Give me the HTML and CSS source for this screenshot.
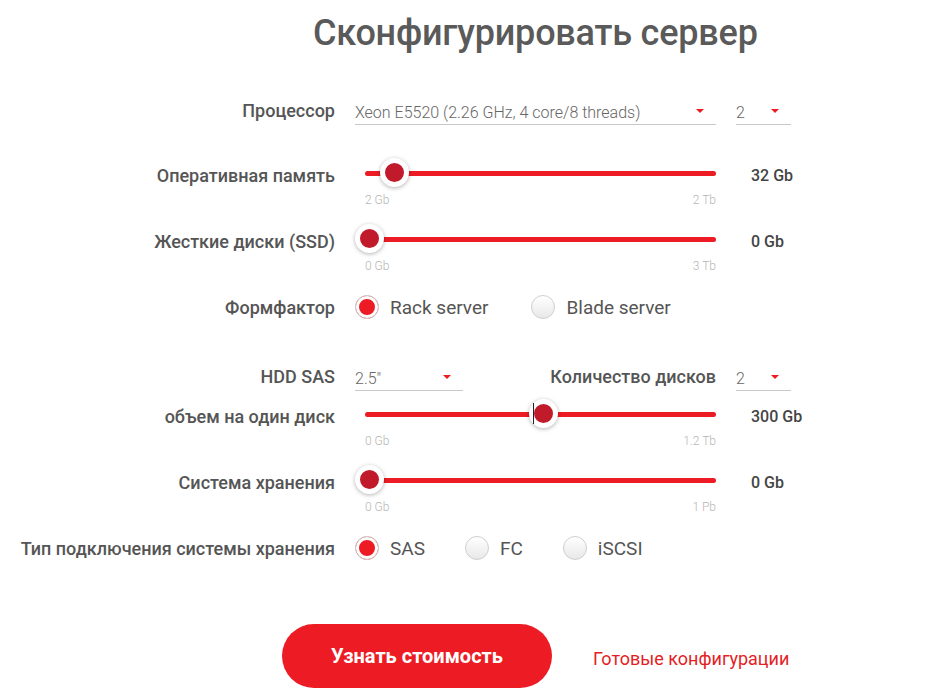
FILE: index.html
```html
<!DOCTYPE html>
<html lang="ru">
    <head>
        <meta charset="UTF-8">
        <meta name="viewport" content="width=device-width, initial-scale=1.0">
        <title>Сконфигурировать сервер</title>
        <link rel="stylesheet" href="styles.css">
    </head>
    <body>

        <div id="configurator">
            <h1 class="title">Сконфигурировать сервер</h1>

            <div class="row row-select">
                <div class="label">Процессор</div>
                <div class="control">
                    <div class="select select-wide">Xeon E5520 (2.26 GHz, 4 core/8 threads)<span class="arrow"></span></div>
                </div>
                <div class="value">
                    <div class="select select-small">2<span class="arrow"></span></div>
                </div>
            </div>

            <div class="row row-slider row-memory">
                <div class="label">Оперативная память</div>
                <div class="control">
                    <div class="slider">
                        <div class="track"></div>
                        <div class="thumb" style="left: 7.1%;"></div>
                    </div>
                </div>
                <div class="value">32 Gb</div>
                <div class="scale"><span>2 Gb</span><span>2 Tb</span></div>
            </div>

            <div class="row row-slider">
                <div class="label">Жесткие диски (SSD)</div>
                <div class="control">
                    <div class="slider">
                        <div class="track"></div>
                        <div class="thumb" style="left: 0%;"></div>
                    </div>
                </div>
                <div class="value">0 Gb</div>
                <div class="scale"><span>0 Gb</span><span>3 Tb</span></div>
            </div>

            <div class="row row-radio">
                <div class="label">Формфактор</div>
                <div class="control radios">
                    <label class="radio radio-wide checked"><span class="dot"></span>Rack server</label>
                    <label class="radio"><span class="dot"></span>Blade server</label>
                </div>
            </div>

            <div class="row row-select row-hdd">
                <div class="label">HDD SAS</div>
                <div class="control split">
                    <div class="select select-mid">2.5"<span class="arrow"></span></div>
                    <div class="label">Количество дисков</div>
                </div>
                <div class="value">
                    <div class="select select-small">2<span class="arrow"></span></div>
                </div>
            </div>

            <div class="row row-slider row-volume">
                <div class="label">объем на один диск</div>
                <div class="control">
                    <div class="slider">
                        <div class="track"></div>
                        <div class="thumb focused" style="left: 49.6%;"></div>
                    </div>
                </div>
                <div class="value">300 Gb</div>
                <div class="scale"><span>0 Gb</span><span>1.2 Tb</span></div>
            </div>

            <div class="row row-slider">
                <div class="label">Система хранения</div>
                <div class="control">
                    <div class="slider">
                        <div class="track"></div>
                        <div class="thumb" style="left: 0%;"></div>
                    </div>
                </div>
                <div class="value">0 Gb</div>
                <div class="scale"><span>0 Gb</span><span>1 Pb</span></div>
            </div>

            <div class="row row-radio row-storage">
                <div class="label">Тип подключения системы хранения</div>
                <div class="control radios">
                    <label class="radio checked"><span class="dot"></span>SAS</label>
                    <label class="radio"><span class="dot"></span>FC</label>
                    <label class="radio"><span class="dot"></span>iSCSI</label>
                </div>
            </div>

            <div class="actions">
                <button class="price-button">Узнать стоимость</button>
                <a class="ready-link" href="#">Готовые конфигурации</a>
            </div>
        </div>

    </body>
</html>
```

FILE: styles.css
```css
body {
    margin: 0;
    background-color: #fff;
    font-family: Roboto, "Liberation Sans", sans-serif;
    color: #555;
}

#configurator {
    width: 941px;
    padding-top: 11px;
}

.title {
    margin: 0 0 35px 0;
    padding-left: 313px;
    font-size: 36px;
    line-height: 44px;
    font-weight: 500;
    color: #5a5a5a;
    letter-spacing: -0.2px;
}

.row {
    display: grid;
    grid-template-columns: 335px 361px 1fr;
    column-gap: 20px;
    align-items: center;
}

.label {
    text-align: right;
    font-size: 18px;
    font-weight: 500;
    color: #555;
    white-space: nowrap;
}

.value {
    font-size: 16px;
    font-weight: 500;
    color: #444;
    padding-left: 15px;
}

/* selects */
.row-select {
    height: 40px;
}

.row-select .value {
    padding-left: 0;
}

.select {
    position: relative;
    box-sizing: border-box;
    height: 29px;
    padding-top: 6px;
    line-height: 22px;
    border-bottom: 1px solid #c8c8c8;
    font-size: 16px;
    font-weight: 300;
    color: #666;
    white-space: nowrap;
}

.select-wide {
    width: 361px;
}

.select-mid {
    width: 108px;
}

.select-small {
    width: 55px;
}

.arrow {
    position: absolute;
    right: 12px;
    top: 13px;
    border-left: 4px solid transparent;
    border-right: 4px solid transparent;
    border-top: 4px solid #ed1c24;
}

.split {
    display: flex;
    justify-content: space-between;
    align-items: center;
}

.row-hdd {
    margin-top: 37px;
    height: 34px;
}

/* sliders */
.row-slider {
    margin-top: 16px;
    grid-template-rows: 30px 16px;
    row-gap: 4px;
}

.row-slider .label,
.row-slider .value {
    padding-top: 4px;
}

.row-memory {
    margin-top: 28px;
}

.row-volume {
    margin-top: 6px;
}

.slider {
    position: relative;
    height: 30px;
    margin-left: 10px;
}

.track {
    position: absolute;
    left: 0;
    right: 0;
    top: 13px;
    height: 5px;
    border-radius: 3px;
    background-color: #ed1c24;
}

.thumb {
    position: absolute;
    top: 0;
    width: 19px;
    height: 19px;
    margin-left: -10px;
    border: 5px solid #fff;
    border-radius: 50%;
    background-color: #c11a2b;
    box-shadow: 0 1px 4px rgba(0, 0, 0, 0.3);
}

.thumb.focused::before {
    content: "";
    position: absolute;
    left: -1px;
    top: -1px;
    width: 1px;
    height: 21px;
    background-color: #222;
}

.scale {
    grid-column: 2;
    display: flex;
    justify-content: space-between;
    padding-left: 10px;
    font-size: 12px;
    font-weight: 300;
    color: #b5b5b5;
}

/* radios */
.row-radio {
    margin-top: 18px;
    height: 30px;
}

.row-storage {
    margin-top: 18px;
}

.radios {
    display: flex;
    align-items: center;
}

.radio {
    display: flex;
    align-items: center;
    margin-right: 40px;
    font-size: 19px;
    color: #555;
    cursor: pointer;
}

.radio-wide {
    margin-right: 43px;
}

.dot {
    box-sizing: border-box;
    width: 24px;
    height: 24px;
    margin-right: 11px;
    border: 1px solid #cfcfcf;
    border-radius: 50%;
    background: linear-gradient(#fff, #e8e8e8);
}

.radio.checked .dot {
    background: #ed1c24;
    box-shadow: inset 0 0 0 3px #fff;
}

/* bottom */
.actions {
    display: flex;
    align-items: center;
    margin-top: 61px;
    padding-left: 282px;
}

.price-button {
    width: 270px;
    height: 64px;
    border: none;
    border-radius: 32px;
    background-color: #ed1c24;
    color: #fff;
    font-family: Roboto, "Liberation Sans", sans-serif;
    font-size: 20px;
    font-weight: 700;
    cursor: pointer;
}

.ready-link {
    margin-left: 41px;
    padding-top: 4px;
    font-size: 18px;
    color: #e31e24;
    text-decoration: none;
}
```
